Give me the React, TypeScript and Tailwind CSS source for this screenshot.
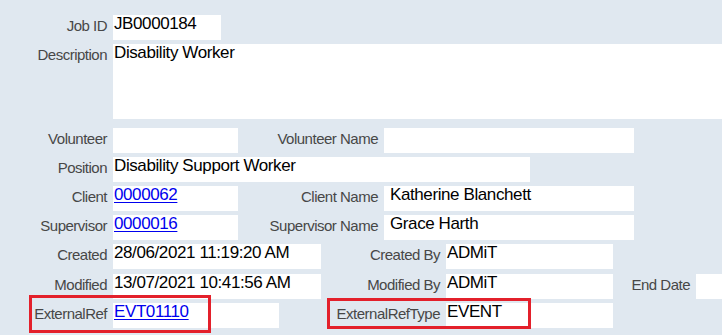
const font = { fontFamily: '"Liberation Sans", Arial, sans-serif' };

const Label = ({ text, w }: { text: string; w: string }) => (
  <div className={`${w} shrink-0 text-right pt-[3px] pr-[6px] text-[15px] leading-[15px] tracking-[-0.5px] text-[#474747] whitespace-nowrap`}>
    {text}
  </div>
);

const Box = ({ w, h = 'h-[25px]', children }: { w: string; h?: string; children?: React.ReactNode }) => (
  <div className={`${w} ${h} shrink-0 bg-white pl-[1px] text-[17px] leading-[17px] tracking-[-0.4px] text-black whitespace-nowrap overflow-hidden`}>
    {children}
  </div>
);

const Link = ({ children }: { children: React.ReactNode }) => (
  <a href="#" className="text-[#0000ee] underline underline-offset-[2px]">{children}</a>
);

export default function App() {
  return (
    <div className="relative w-[722px] h-[335px] overflow-hidden bg-[#e0e8f0]" style={font}>
      <div className="flex flex-col pt-[15px]">
        <div className="flex">
          <Label text="Job ID" w="w-[113px]" />
          <Box w="w-[108px]">JB0000184</Box>
        </div>
        <div className="flex mt-[4px]">
          <Label text="Description" w="w-[113px]" />
          <Box w="w-[620px]" h="h-[75px]">Disability Worker</Box>
        </div>
        <div className="flex mt-[9px]">
          <Label text="Volunteer" w="w-[113px]" />
          <Box w="w-[125px]" />
          <Label text="Volunteer Name" w="w-[146px]" />
          <Box w="w-[250px]" />
        </div>
        <div className="flex mt-[4px]">
          <Label text="Position" w="w-[113px]" />
          <Box w="w-[417px]">Disability Support Worker</Box>
        </div>
        <div className="flex mt-[4px]">
          <Label text="Client" w="w-[113px]" />
          <Box w="w-[125px]"><Link>0000062</Link></Box>
          <Label text="Client Name" w="w-[146px]" />
          <Box w="w-[250px]"><span className="pl-[5px]">Katherine Blanchett</span></Box>
        </div>
        <div className="flex mt-[4px]">
          <Label text="Supervisor" w="w-[113px]" />
          <Box w="w-[125px]"><Link>0000016</Link></Box>
          <Label text="Supervisor Name" w="w-[146px]" />
          <Box w="w-[250px]"><span className="pl-[5px]">Grace Harth</span></Box>
        </div>
        <div className="flex mt-[4px]">
          <Label text="Created" w="w-[113px]" />
          <Box w="w-[208px]">28/06/2021 11:19:20 AM</Box>
          <Label text="Created By" w="w-[125px]" />
          <Box w="w-[167px]">ADMiT</Box>
        </div>
        <div className="flex mt-[5px]">
          <Label text="Modified" w="w-[113px]" />
          <Box w="w-[208px]">13/07/2021 10:41:56 AM</Box>
          <Label text="Modified By" w="w-[125px]" />
          <Box w="w-[167px]">ADMiT</Box>
          <Label text="End Date" w="w-[83px]" />
          <Box w="w-[40px]" />
        </div>
        <div className="flex mt-[4px]">
          <Label text="ExternalRef" w="w-[113px]" />
          <Box w="w-[166px]"><Link>EVT01110</Link></Box>
          <Label text="ExternalRefType" w="w-[167px]" />
          <Box w="w-[167px]">EVENT</Box>
        </div>
      </div>
      <div className="absolute left-[29px] top-[295px] w-[182px] h-[38px] border-[3px] border-[#e3202b]" />
      <div className="absolute left-[327px] top-[298px] w-[204px] h-[31px] border-[3px] border-[#e3202b]" />
    </div>
  );
}
